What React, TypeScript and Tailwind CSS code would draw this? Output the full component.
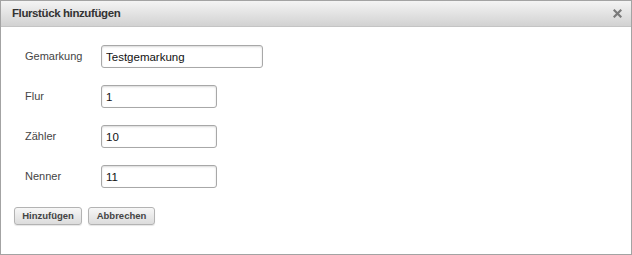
const fields = [
  { label: "Gemarkung", value: "Testgemarkung", wide: true },
  { label: "Flur", value: "1" },
  { label: "Zähler", value: "10" },
  { label: "Nenner", value: "11" },
];

export default function App() {
  return (
    <div className="h-[255px] w-[632px] bg-white font-['Liberation_Sans',Arial,sans-serif]">
      <div className="flex h-[255px] flex-col border border-[#a3a3a3] bg-white">
        <div className="flex h-[26px] items-center justify-between border-b border-[#c4c4c4] bg-gradient-to-b from-[#f4f4f4] to-[#d2d2d2] pl-[11px] pr-[8px]">
          <span className="text-[11.5px] font-bold tracking-[-0.4px] text-[#333]">Flurstück hinzufügen</span>
          <svg width="9" height="9" viewBox="0 0 9 9" className="mr-[1px]">
            <path d="M1.5 1.5 L7.5 7.5 M7.5 1.5 L1.5 7.5" stroke="#7a7a7a" strokeWidth="2.2" strokeLinecap="square" />
          </svg>
        </div>
        <div className="flex flex-col gap-[17px] pl-[24px] pt-[18px]">
          {fields.map((f) => (
            <div key={f.label} className="flex items-center">
              <label className="w-[76px] text-[11px] text-[#444]">{f.label}</label>
              <input
                readOnly
                value={f.value}
                className={`h-[23px] rounded-[3px] border border-[#a8a8a8] px-[4px] text-[11.5px] text-[#111] shadow-[inset_0_1px_2px_rgba(0,0,0,0.15)] outline-none ${
                  f.wide ? "w-[162px]" : "w-[116px]"
                }`}
              />
            </div>
          ))}
        </div>
        <div className="mt-[19px] flex gap-[6px] pl-[13px]">
          <button className="h-[18px] w-[68px] rounded-[3px] border border-[#b3b3b3] bg-gradient-to-b from-[#f7f7f7] to-[#dcdcdc] text-[9.5px] font-bold text-[#444] shadow-[0_1px_1px_rgba(0,0,0,0.1)]">
            Hinzufügen
          </button>
          <button className="h-[18px] w-[67px] rounded-[3px] border border-[#b3b3b3] bg-gradient-to-b from-[#f7f7f7] to-[#dcdcdc] text-[9.5px] font-bold text-[#444] shadow-[0_1px_1px_rgba(0,0,0,0.1)]">
            Abbrechen
          </button>
        </div>
      </div>
    </div>
  );
}
